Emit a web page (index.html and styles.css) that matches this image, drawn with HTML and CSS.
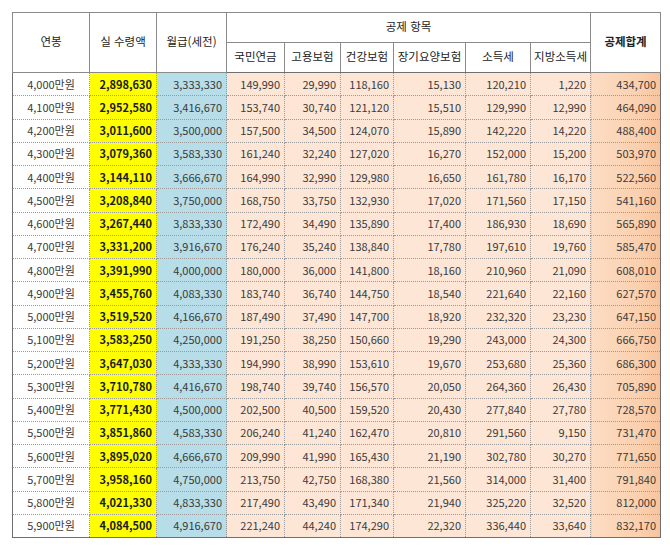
FILE: index.html
```html
<!DOCTYPE html>
<html lang="ko">
<head>
<meta charset="utf-8">
<link rel="stylesheet" href="styles.css">
</head>
<body>
<table class="sheet">
  <colgroup>
    <col class="c-salary"><col class="c-net"><col class="c-gross">
    <col class="c-np"><col class="c-ei"><col class="c-hi"><col class="c-ltc">
    <col class="c-it"><col class="c-lit"><col class="c-total">
  </colgroup>
  <thead>
    <tr class="h1">
      <th rowspan="2">연봉</th>
      <th rowspan="2">실 수령액</th>
      <th rowspan="2">월급(세전)</th>
      <th colspan="6">공제 항목</th>
      <th rowspan="2" class="bold">공제합계</th>
    </tr>
    <tr class="h2">
      <th>국민연금</th><th>고용보험</th><th>건강보험</th><th>장기요양보험</th><th>소득세</th><th>지방소득세</th>
    </tr>
  </thead>
  <tbody id="rows"></tbody>
</table>
<script>
const data = [
["4,000만원","2,898,630","3,333,330","149,990","29,990","118,160","15,130","120,210","1,220","434,700"],
["4,100만원","2,952,580","3,416,670","153,740","30,740","121,120","15,510","129,990","12,990","464,090"],
["4,200만원","3,011,600","3,500,000","157,500","34,500","124,070","15,890","142,220","14,220","488,400"],
["4,300만원","3,079,360","3,583,330","161,240","32,240","127,020","16,270","152,000","15,200","503,970"],
["4,400만원","3,144,110","3,666,670","164,990","32,990","129,980","16,650","161,780","16,170","522,560"],
["4,500만원","3,208,840","3,750,000","168,750","33,750","132,930","17,020","171,560","17,150","541,160"],
["4,600만원","3,267,440","3,833,330","172,490","34,490","135,890","17,400","186,930","18,690","565,890"],
["4,700만원","3,331,200","3,916,670","176,240","35,240","138,840","17,780","197,610","19,760","585,470"],
["4,800만원","3,391,990","4,000,000","180,000","36,000","141,800","18,160","210,960","21,090","608,010"],
["4,900만원","3,455,760","4,083,330","183,740","36,740","144,750","18,540","221,640","22,160","627,570"],
["5,000만원","3,519,520","4,166,670","187,490","37,490","147,700","18,920","232,320","23,230","647,150"],
["5,100만원","3,583,250","4,250,000","191,250","38,250","150,660","19,290","243,000","24,300","666,750"],
["5,200만원","3,647,030","4,333,330","194,990","38,990","153,610","19,670","253,680","25,360","686,300"],
["5,300만원","3,710,780","4,416,670","198,740","39,740","156,570","20,050","264,360","26,430","705,890"],
["5,400만원","3,771,430","4,500,000","202,500","40,500","159,520","20,430","277,840","27,780","728,570"],
["5,500만원","3,851,860","4,583,330","206,240","41,240","162,470","20,810","291,560","9,150","731,470"],
["5,600만원","3,895,020","4,666,670","209,990","41,990","165,430","21,190","302,780","30,270","771,650"],
["5,700만원","3,958,160","4,750,000","213,750","42,750","168,380","21,560","314,000","31,400","791,840"],
["5,800만원","4,021,330","4,833,330","217,490","43,490","171,340","21,940","325,220","32,520","812,000"],
["5,900만원","4,084,500","4,916,670","221,240","44,240","174,290","22,320","336,440","33,640","832,170"]
];
const cls = ["salary","net","gross","ded","ded","ded","ded","ded","ded","total"];
const tb = document.getElementById("rows");
data.forEach(r => {
  const tr = document.createElement("tr");
  r.forEach((v, i) => {
    const td = document.createElement("td");
    td.className = cls[i];
    td.textContent = v;
    tr.appendChild(td);
  });
  tb.appendChild(tr);
});
</script>
</body>
</html>
```

FILE: styles.css
```css
html, body {
  margin: 0;
  padding: 0;
  background: #ffffff;
}
body {
  padding: 12px 0 0 12px;
  font-family: "Noto Sans CJK KR", "Noto Sans", sans-serif;
  color: #3a3a3a;
}
.sheet {
  border-collapse: collapse;
  table-layout: fixed;
  width: 648px;
  border: 1px solid #6f6f6f;
  font-size: 11px;
}
.c-salary { width: 77px; }
.c-net { width: 67px; }
.c-gross { width: 70px; }
.c-np { width: 58px; }
.c-ei { width: 56px; }
.c-hi { width: 53px; }
.c-ltc { width: 72px; }
.c-it { width: 65px; }
.c-lit { width: 60px; }
.c-total { width: 70px; }

.sheet th {
  font-weight: 400;
  color: #222222;
  font-size: 11.5px;
  border: 1px solid #8a8a8a;
  padding: 0 0 3px 0;
  background: #ffffff;
  line-height: 14px;
}
.sheet th.bold { font-weight: 700; }
.h1 th, .h2 th { height: 30px; box-sizing: border-box; }
.sheet thead tr:last-child th { border-bottom: 1px solid #6f6f6f; }

.sheet td {
  height: 23.25px;
  box-sizing: border-box;
  padding: 0 4px 1px 2px;
  text-align: right;
  white-space: nowrap;
  line-height: 14px;
  border: 1px dotted #9a9a9a;
}
.sheet td.salary {
  text-align: center;
  padding: 0 0 1px 0;
  background: #ffffff;
}
.sheet td.net {
  background: #ffff00;
  font-weight: 700;
  color: #1a1a1a;
}
.sheet td.gross { background: #b7dde8; }
.sheet td.ded { background: #fde6d6; }
.sheet td.total {
  background: linear-gradient(90deg, #fcdcc4 0%, #fad0ae 70%, #f8c39c 100%);
}
.sheet tbody tr:last-child td { border-bottom: 1px solid #6f6f6f; }
```
